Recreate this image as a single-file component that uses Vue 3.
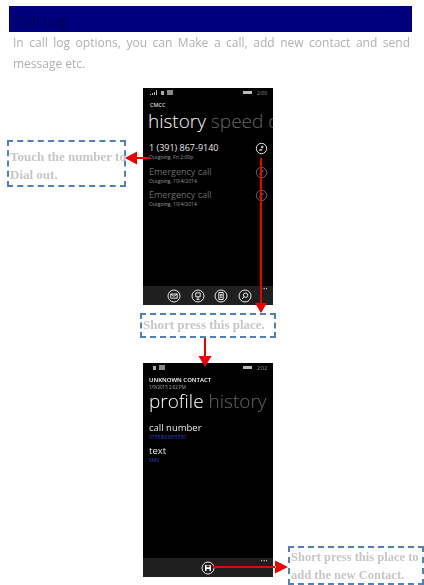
<template>
  <div class="page">
    <h1 class="title">Call Log</h1>
    <p class="intro">In call log options, you can Make a call, add new contact and send message etc.</p>

    <div class="phones">
      <section class="phone phone--history">
        <div class="status">
          <span class="status__left">
            <svg width="8" height="5" viewBox="0 0 8 5"><path d="M0 4h1v1H0zM2 3h1v2H2zM4 2h1v3H4zM6 0h1v5H6z" fill="#bbb" /></svg>
            <i class="status__tiny"></i>
            <i class="status__sim"></i>
          </span>
          <span class="status__right"><i class="status__battery"></i>2:00</span>
        </div>
        <div class="carrier">CMCC</div>
        <div class="pivot">
          <span>history</span>
          <span class="pivot__off">speed dial</span>
        </div>
        <ul class="calls">
          <li v-for="call in calls" :key="call.id" class="call" :class="{ 'call--dim': call.dim }">
            <div>
              <div class="call__name">{{ call.name }}</div>
              <div class="call__sub">{{ call.sub }}</div>
            </div>
            <svg class="call__icon" width="13" height="13" viewBox="0 0 13 13">
              <circle cx="6.5" cy="6.5" r="5.2" fill="none" stroke="currentColor" stroke-width="1" />
              <path d="M4 8.800c0-1.300.8-2 1.700-2s1.700.7 1.700 2zM7.200 3.800a1.300 1.300 0 1 1 0 2.600a1.300 1.300 0 0 1 0-2.600z" fill="currentColor" opacity="0.8" />
            </svg>
          </li>
        </ul>
        <div class="appbar">
          <svg class="round" width="14" height="14" viewBox="0 0 14 14">
            <circle cx="7" cy="7" r="6" />
            <path d="M3.800 5h6.400v4.200H3.800zM3.800 5l3.200 2.400L10.200 5" />
          </svg>
          <svg class="round" width="14" height="14" viewBox="0 0 14 14">
            <circle cx="7" cy="7" r="6" />
            <path d="M4.800 3.800h4.400v4H4.800zM7 7.800v2.600M5.500 10.400h3" />
          </svg>
          <svg class="round" width="14" height="14" viewBox="0 0 14 14">
            <circle cx="7" cy="7" r="6" />
            <path d="M4.800 3.500h4.400v7H4.800z" />
            <circle cx="7" cy="6.200" r="1" />
            <path d="M5.800 9c0-1 2.400-1 2.400 0" />
          </svg>
          <svg class="round" width="14" height="14" viewBox="0 0 14 14">
            <circle cx="7" cy="7" r="6" />
            <circle cx="7.600" cy="6.200" r="2.200" />
            <path d="M6 7.800l-2 2.200" />
          </svg>
          <span class="appbar__more">&bull;&bull;&bull;</span>
        </div>
      </section>

      <section class="phone phone--contact">
        <div class="status status--contact">
          <span class="status__left">
            <i class="status__tiny"></i>
            <i class="status__sim"></i>
          </span>
          <span class="status__right"><i class="status__battery"></i>2:02</span>
        </div>
        <div class="contact-name">UNKNOWN CONTACT</div>
        <div class="contact-date">1/9/2015 2:02 PM</div>
        <div class="pivot pivot--contact">
          <span>profile</span>
          <span class="pivot__off">history</span>
        </div>
        <div class="field">
          <div class="field__label">call number</div>
          <div class="field__value">0755860955550</div>
        </div>
        <div class="field">
          <div class="field__label">text</div>
          <div class="field__value">SMS</div>
        </div>
        <div class="appbar appbar--single">
          <svg class="round" width="14" height="14" viewBox="0 0 14 14">
            <circle cx="7" cy="7" r="6" />
            <path d="M4 4h5.500L10 4.500V10H4z" fill="#fff" stroke="none" />
            <path d="M5.500 4.500h3v1.800h-3zM5.500 8h3v2h-3z" fill="#1f1f1f" stroke="none" />
          </svg>
          <span class="appbar__more">&bull;&bull;&bull;</span>
        </div>
      </section>
    </div>

    <!-- annotations sit on top of the screenshots -->
    <div class="note note--dial">Touch the number to<br />Dial out.</div>
    <div class="note note--press">Short press this place.</div>
    <div class="note note--add">Short press this place to<br />add the new Contact.</div>

    <svg class="arrows" width="424" height="585" viewBox="0 0 424 585">
      <g fill="#ee0000">
        <path d="M136 157h14v2h-14zM125 158l12-6.500v13z" />
        <path d="M260 158h2v146h-2zM261 313l-6-10h12z" />
        <path d="M204 338h2v19h-2zM205 367l-6.500-11h13z" />
        <path d="M213 566h63v2h-63zM288 567l-13-6.500v13z" />
      </g>
    </svg>
  </div>
</template>

<script setup>
const calls = [
  { id: 1, name: "1 (391) 867-9140", sub: "Outgoing, Fri 2:00p", dim: false },
  { id: 2, name: "Emergency call", sub: "Outgoing, 10/4/2014", dim: true },
  { id: 3, name: "Emergency call", sub: "Outgoing, 10/4/2014", dim: true },
];
</script>

<style scoped>
.page {
  position: relative;
  width: 424px;
  height: 585px;
  overflow: hidden;
  background: #fff;
  font-family: "Open Sans", "Liberation Sans", sans-serif;
}

.title {
  margin: 6px 12px 0 9px;
  height: 26px;
  padding-left: 5px;
  background: #00007f;
  color: #000050;
  font-family: "Open Sans", sans-serif;
  font-size: 15px;
  font-weight: 400;
  line-height: 30px;
  filter: blur(0.4px);
}

.intro {
  margin: 0 14px 0 13px;
  color: #b0b0b0;
  font-size: 12px;
  line-height: 21px;
  text-align: justify;
  filter: blur(0.5px);
}

.phones {
  margin-top: 14px;
  padding-right: 8px;
  display: flex;
  flex-direction: column;
  align-items: center;
  gap: 58px;
  filter: blur(0.3px);
}

.phone {
  display: flex;
  flex-direction: column;
  width: 130px;
  overflow: hidden;
  background: #000;
  color: #fff;
}

.phone--history {
  height: 217px;
}

.phone--contact {
  height: 214px;
}

.status {
  display: flex;
  justify-content: space-between;
  align-items: center;
  height: 9px;
  padding: 0 6px 0 7px;
  color: #999;
  font-size: 5px;
}

.status--contact {
  padding-left: 10px;
}

.status__left,
.status__right {
  display: flex;
  align-items: center;
  gap: 3px;
}

.status__tiny {
  width: 3px;
  height: 4px;
  background: #aaa;
}

.status__sim {
  width: 6px;
  height: 5px;
  background: #888;
}

.status__battery {
  width: 9px;
  height: 3px;
  margin-right: 2px;
  background: #bbb;
}

.carrier {
  margin: 4px 0 0 7px;
  font-size: 5.500px;
  line-height: 8px;
}

.pivot {
  display: flex;
  gap: 5px;
  margin: 0 0 0 5px;
  font-size: 19px;
  font-weight: 300;
  line-height: 24px;
  white-space: nowrap;
}

.pivot__off {
  color: #666;
}

.calls {
  list-style: none;
  margin: 8px 0 0;
  padding: 0 5px 0 6px;
  flex: 1;
}

.call {
  display: flex;
  justify-content: space-between;
  align-items: flex-start;
  height: 23.500px;
  color: #e8e8e8;
}

.call--dim {
  color: #6a6a6a;
}

.call__name {
  font-size: 9px;
  line-height: 13px;
}

.call__sub {
  font-size: 5px;
  line-height: 6px;
  color: #999;
}

.call__icon {
  margin-top: 1px;
}

.appbar {
  position: relative;
  display: flex;
  justify-content: flex-start;
  align-items: center;
  gap: 9.500px;
  height: 19px;
  padding-left: 24px;
  background: #1f1f1f;
}

.appbar--single {
  margin-top: auto;
  padding-left: 58px;
}

.appbar__more {
  position: absolute;
  top: 0;
  right: 5px;
  color: #ddd;
  font-size: 5px;
  line-height: 7px;
  letter-spacing: 0.5px;
}

.round {
  fill: none;
  stroke: #e6e6e6;
  stroke-width: 1;
}

.contact-name {
  margin: 4px 0 0 6px;
  font-size: 6px;
  font-weight: 600;
  line-height: 8px;
}

.contact-date {
  margin-left: 6px;
  color: #aaa;
  font-size: 4.500px;
  line-height: 7px;
}

.pivot--contact {
  margin: 0 0 9px 6px;
  gap: 5px;
  line-height: 21px;
}

.field {
  margin: 0 0 3px 6px;
}

.field__label {
  font-size: 9.500px;
  line-height: 13px;
  color: #e8e8e8;
}

.field__value {
  color: #3040c8;
  font-size: 5px;
  line-height: 7px;
}

.note {
  position: absolute;
  box-sizing: border-box;
  border: 2px dashed #4f81bd;
  padding: 6px 0 0 1px;
  color: #c6c6c6;
  font-family: "Liberation Serif", serif;
  font-size: 13px;
  font-weight: 700;
  line-height: 18px;
  white-space: nowrap;
  filter: blur(0.3px);
}

.note--dial {
  left: 7px;
  top: 140px;
  width: 119px;
  height: 47px;
}

.note--press {
  left: 140px;
  top: 313px;
  width: 136px;
  height: 25px;
  padding-top: 1px;
  padding-left: 1px;
}

.note--add {
  left: 288px;
  top: 546px;
  width: 136px;
  height: 39px;
  padding-top: 0;
  padding-left: 1px;
  font-size: 12.500px;
}

.arrows {
  position: absolute;
  left: 0;
  top: 0;
  pointer-events: none;
}
</style>
